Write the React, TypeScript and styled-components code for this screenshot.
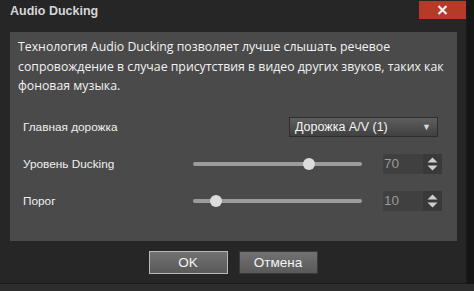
import React from 'react'
import styled, { createGlobalStyle } from 'styled-components'

const GlobalStyle = createGlobalStyle`
  html, body { margin: 0; padding: 0; background: #2c2c2c; }
  #root { width: 474px; height: 291px; overflow: hidden; }
`

const Screen = styled.div`
  width: 474px;
  height: 291px;
  display: flex;
  align-items: flex-start;
  background: #2d2d2d;
  font-family: "Liberation Sans", Arial, sans-serif;
`

const Dialog = styled.div`
  width: 467px;
  height: 284px;
  background: #262626;
  border-right: 1px solid #1a1a1a;
  border-bottom: 1px solid #1a1a1a;
  display: flex;
  flex-direction: column;
  box-sizing: border-box;
`

const TitleBar = styled.div`
  height: 32px;
  display: flex;
  align-items: flex-start;
  justify-content: space-between;
`

const Title = styled.h1`
  margin: 4px 0 0 10px;
  font-size: 12.5px;
  font-weight: bold;
  color: #d6d6d6;
`

const CloseButton = styled.button`
  margin-top: 1px;
  width: 47px;
  height: 18px;
  border: none;
  padding: 0;
  background: #b53a28;
  display: flex;
  align-items: center;
  justify-content: center;
`

const Panel = styled.div`
  margin-left: 10px;
  width: 447px;
  height: 209px;
  background: #4a4a4a;
  box-sizing: border-box;
  padding: 5px 0 0 8px;
`

const Description = styled.p`
  margin: 0;
  font-family: "Open Sans", "Noto Sans", sans-serif;
  font-size: 12.3px;
  line-height: 19.5px;
  color: #f2f2f2;
  width: 432px;
`

const Settings = styled.div`
  margin: 21px 0 0 5px;
  width: 419px;
  display: flex;
  flex-direction: column;
  gap: 17px;
`

const Row = styled.div`
  height: 20px;
  display: flex;
  align-items: center;
`

const Label = styled.span`
  width: 170px;
  font-size: 11.8px;
  color: #f0f0f0;
`

const Select = styled.div`
  margin-left: auto;
  margin-right: 4px;
  width: 149px;
  height: 20px;
  box-sizing: border-box;
  border: 1px solid #2e2e2e;
  background: linear-gradient(#5e5e5e, #404040);
  display: flex;
  align-items: center;
  justify-content: space-between;
  padding: 0 6px 0 5px;
  font-size: 12.5px;
  color: #f4f4f4;
`

const Caret = styled.span`
  font-size: 9px;
  color: #d8d8d8;
`

const Track = styled.div`
  position: relative;
  width: 169px;
  height: 4px;
  border-radius: 2px;
  background: #9c9c9c;
`

const Thumb = styled.div`
  position: absolute;
  top: -4px;
  width: 12px;
  height: 12px;
  margin-left: -6px;
  border-radius: 50%;
  background: #dcdcdc;
`

const NumberBox = styled.div`
  margin-left: 21px;
  display: flex;
  height: 20px;
`

const NumberValue = styled.div`
  width: 40px;
  background: #404040;
  color: #9a9a9a;
  font-size: 13.5px;
  display: flex;
  align-items: center;
  padding-left: 1px;
  box-sizing: border-box;
`

const Spinner = styled.div`
  width: 19px;
  background: #393939;
  display: flex;
  align-items: center;
  justify-content: center;
`

const Footer = styled.div`
  flex: 1;
  display: flex;
  justify-content: center;
  align-items: flex-start;
  gap: 11px;
  padding-top: 10px;
`

const Button = styled.button<{ $focused?: boolean }>`
  width: 79px;
  height: 23px;
  box-sizing: border-box;
  border: 1px solid ${p => (p.$focused ? '#b8b8b8' : '#3a3a3a')};
  background: linear-gradient(#727272, #595959);
  color: #f4f4f4;
  font: 13.5px "Liberation Sans", Arial, sans-serif;
  padding: 0;
`

const Backdrop = styled.div`
  flex: 1;
  height: 284px;
  background: #161616;
`

function CloseIcon() {
  return (
    <svg width="11" height="10" viewBox="0 0 11 10">
      <path d="M1.5 1 L9.5 9 M9.5 1 L1.5 9" stroke="#f2f2f2" strokeWidth="2.2" />
    </svg>
  )
}

function SpinArrows() {
  return (
    <svg width="13" height="16" viewBox="0 0 13 16">
      <path d="M1.5 6.5 L6.5 1.5 L11.5 6.5 Z" fill="#cfcfcf" />
      <path d="M1.5 9.5 L6.5 14.5 L11.5 9.5 Z" fill="#cfcfcf" />
    </svg>
  )
}

function SliderRow({ label, value, pos }: { label: string; value: number; pos: number }) {
  return (
    <Row>
      <Label>{label}</Label>
      <Track>
        <Thumb style={{ left: pos }} />
      </Track>
      <NumberBox>
        <NumberValue>{value}</NumberValue>
        <Spinner>
          <SpinArrows />
        </Spinner>
      </NumberBox>
    </Row>
  )
}

export default function App() {
  return (
    <>
      <GlobalStyle />
      <Screen>
        <Dialog>
          <TitleBar>
            <Title>Audio Ducking</Title>
            <CloseButton aria-label="Закрыть">
              <CloseIcon />
            </CloseButton>
          </TitleBar>
          <Panel>
            <Description>
              Технология Audio Ducking позволяет лучше слышать речевое сопровождение в случае присутствия в
              видео других звуков, таких как фоновая музыка.
            </Description>
            <Settings>
              <Row>
                <Label>Главная дорожка</Label>
                <Select>
                  Дорожка A/V (1)
                  <Caret>▼</Caret>
                </Select>
              </Row>
              <SliderRow label="Уровень Ducking" value={70} pos={116} />
              <SliderRow label="Порог" value={10} pos={23} />
            </Settings>
          </Panel>
          <Footer>
            <Button $focused>OK</Button>
            <Button>Отмена</Button>
          </Footer>
        </Dialog>
        <Backdrop />
      </Screen>
    </>
  )
}
